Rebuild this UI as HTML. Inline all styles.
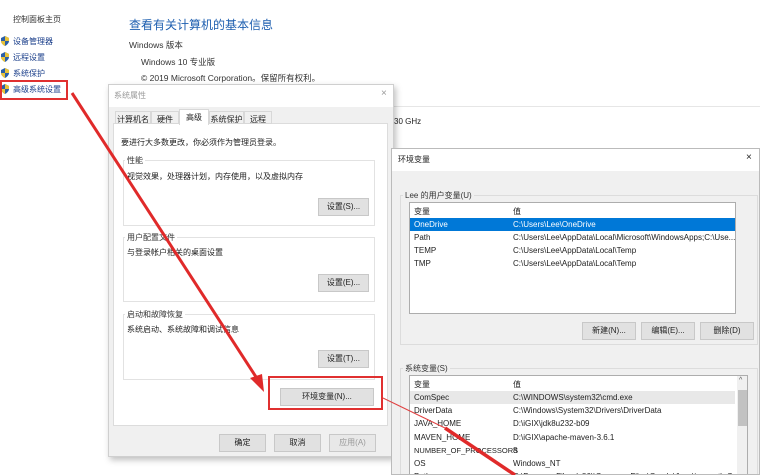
<!DOCTYPE html>
<html style="overflow:hidden;width:760px;height:475px"><head><meta charset="utf-8"><style>
*{margin:0;padding:0;box-sizing:border-box}
body{width:760px;height:475px;overflow:hidden;background:#fff;position:relative;font-family:"Liberation Sans","Noto Sans CJK SC",sans-serif;font-size:8px;color:#222}
.a{position:absolute;white-space:nowrap}
.sh{position:absolute;left:0;width:10px;height:10px}
.btn{position:absolute;background:#e1e1e1;border:1px solid #c8c8c8;text-align:center;font-size:8px;color:#222}
.grp{position:absolute;border:1px solid #e2e2e2}
.gl{position:absolute;background:#fff;padding:0 2px;font-size:8px;color:#333}
.tab{position:absolute;top:26px;height:13px;border:1px solid #d8d8d8;background:#f0f0f0;padding:2px 0;text-align:center;overflow:hidden}
</style></head><body>
<div class="a" style="left:13px;top:14px;font-size:8px;color:#333">控制面板主页</div>
<svg class="sh" style="top:36px" viewBox="0 0 10 10"><path d="M5 0L9 2V5C9 8 5 10 5 10S1 8 1 5V2Z" fill="#2a5fa8"/><path d="M5 0L9 2V5H5Z M1 5H5V10C3 9 1 7 1 5Z" fill="#e8c33a"/></svg>
<div class="a" style="left:13px;top:36px;color:#1a3e8a">设备管理器</div>
<svg class="sh" style="top:52px" viewBox="0 0 10 10"><path d="M5 0L9 2V5C9 8 5 10 5 10S1 8 1 5V2Z" fill="#2a5fa8"/><path d="M5 0L9 2V5H5Z M1 5H5V10C3 9 1 7 1 5Z" fill="#e8c33a"/></svg>
<div class="a" style="left:13px;top:52px;color:#1a3e8a">远程设置</div>
<svg class="sh" style="top:68px" viewBox="0 0 10 10"><path d="M5 0L9 2V5C9 8 5 10 5 10S1 8 1 5V2Z" fill="#2a5fa8"/><path d="M5 0L9 2V5H5Z M1 5H5V10C3 9 1 7 1 5Z" fill="#e8c33a"/></svg>
<div class="a" style="left:13px;top:68px;color:#1a3e8a">系统保护</div>
<svg class="sh" style="top:84px" viewBox="0 0 10 10"><path d="M5 0L9 2V5C9 8 5 10 5 10S1 8 1 5V2Z" fill="#2a5fa8"/><path d="M5 0L9 2V5H5Z M1 5H5V10C3 9 1 7 1 5Z" fill="#e8c33a"/></svg>
<div class="a" style="left:13px;top:84px;color:#1a3e8a">高级系统设置</div>
<div class="a" style="left:0;top:80px;width:68px;height:20px;border:2px solid #e03030"></div>

<div class="a" style="left:129px;top:16px;font-size:12px;color:#1e5fb0">查看有关计算机的基本信息</div>
<div class="a" style="left:129px;top:39px;font-size:8.5px;color:#333">Windows 版本</div>
<div class="a" style="left:141px;top:56px;font-size:8.5px;color:#333">Windows 10 专业版</div>
<div class="a" style="left:141px;top:72px;font-size:8.5px;color:#333">© 2019 Microsoft Corporation。保留所有权利。</div>
<div class="a" style="left:393px;top:106px;width:367px;height:1px;background:#e6e6e6"></div>
<div class="a" style="left:394px;top:117px;font-size:8px">30 GHz</div>

<!-- system properties -->
<div class="a" style="left:108px;top:84px;width:286px;height:373px;background:#f0f0f0;border:1px solid #cfcfcf;box-shadow:2px 3px 6px rgba(0,0,0,.25)">
<div class="a" style="left:0;top:0;width:284px;height:22px;background:#fff"></div>
<div class="a" style="left:5px;top:5px;color:#999">系统属性</div>
<div class="a" style="left:272px;top:3px;color:#999;font-size:10px">×</div>
<div class="a" style="left:4px;top:38px;width:275px;height:303px;background:#fff;border:1px solid #dcdcdc"></div>
<div class="tab" style="left:6px;width:36px">计算机名</div>
<div class="tab" style="left:42px;width:28px">硬件</div>
<div class="tab" style="left:100px;width:35px">系统保护</div>
<div class="tab" style="left:135px;width:28px">远程</div>
<div class="a" style="left:70px;top:24px;width:30px;height:16px;border:1px solid #d8d8d8;border-bottom:none;background:#fff;padding:2px 0;text-align:center">高级</div>
<div class="a" style="left:12px;top:52px">要进行大多数更改，你必须作为管理员登录。</div>
<div class="grp" style="left:14px;top:75px;width:252px;height:66px"></div><div class="gl" style="left:16px;top:70px">性能</div>
<div class="a" style="left:18px;top:86px">视觉效果，处理器计划，内存使用，以及虚拟内存</div>
<div class="btn" style="left:209px;top:113px;width:51px;height:18px;line-height:16px">设置(S)...</div>
<div class="grp" style="left:14px;top:152px;width:252px;height:65px"></div><div class="gl" style="left:16px;top:147px">用户配置文件</div>
<div class="a" style="left:18px;top:162px">与登录帐户相关的桌面设置</div>
<div class="btn" style="left:209px;top:189px;width:51px;height:18px;line-height:16px">设置(E)...</div>
<div class="grp" style="left:14px;top:229px;width:252px;height:66px"></div><div class="gl" style="left:16px;top:224px">启动和故障恢复</div>
<div class="a" style="left:18px;top:239px">系统启动、系统故障和调试信息</div>
<div class="btn" style="left:209px;top:265px;width:51px;height:18px;line-height:16px">设置(T)...</div>
<div class="btn" style="left:171px;top:303px;width:94px;height:18px;line-height:16px">环境变量(N)...</div>
<div class="btn" style="left:110px;top:349px;width:47px;height:18px;line-height:16px">确定</div>
<div class="btn" style="left:165px;top:349px;width:47px;height:18px;line-height:16px">取消</div>
<div class="btn" style="left:220px;top:349px;width:47px;height:18px;line-height:16px;color:#999;background:#e8e8e8">应用(A)</div>
</div>
<div class="a" style="left:268px;top:376px;width:115px;height:34px;border:2px solid #e03030"></div>

<!-- env vars -->
<div class="a" style="left:391px;top:148px;width:369px;height:327px;background:#f0f0f0;border:1px solid #bbb;overflow:hidden">
<div class="a" style="left:0;top:0;width:368px;height:22px;background:#fff"></div>
<div class="a" style="left:6px;top:5px">环境变量</div>
<div class="a" style="left:354px;top:3px;font-size:10px">×</div>
<div class="grp" style="left:8px;top:46px;width:358px;height:150px;border-color:#dcdcdc"></div>
<div class="gl" style="left:11px;top:41px;background:#f0f0f0">Lee 的用户变量(U)</div>
<div class="a" style="left:17px;top:53px;width:327px;height:112px;background:#fff;border:1px solid #adadad">
<div class="a" style="left:4px;top:3px">变量</div><div class="a" style="left:103px;top:3px">值</div>
<div class="a" style="left:0;top:15px;width:325px;height:13px;background:#0078d7"></div>
<div class="a" style="left:4px;top:17px;color:#fff">OneDrive</div><div class="a" style="left:103px;top:17px;color:#fff">C:\Users\Lee\OneDrive</div>
<div class="a" style="left:4px;top:30px">Path</div><div class="a" style="left:103px;top:30px">C:\Users\Lee\AppData\Local\Microsoft\WindowsApps;C:\Use...</div>
<div class="a" style="left:4px;top:43px">TEMP</div><div class="a" style="left:103px;top:43px">C:\Users\Lee\AppData\Local\Temp</div>
<div class="a" style="left:4px;top:56px">TMP</div><div class="a" style="left:103px;top:56px">C:\Users\Lee\AppData\Local\Temp</div>
</div>
<div class="btn" style="left:190px;top:173px;width:54px;height:18px;line-height:16px">新建(N)...</div>
<div class="btn" style="left:249px;top:173px;width:54px;height:18px;line-height:16px">编辑(E)...</div>
<div class="btn" style="left:308px;top:173px;width:54px;height:18px;line-height:16px">删除(D)</div>
<div class="grp" style="left:8px;top:219px;width:358px;height:120px;border-color:#dcdcdc"></div>
<div class="gl" style="left:11px;top:214px;background:#f0f0f0">系统变量(S)</div>
<div class="a" style="left:17px;top:226px;width:339px;height:110px;background:#fff;border:1px solid #adadad;overflow:hidden">
<div class="a" style="left:4px;top:3px">变量</div><div class="a" style="left:103px;top:3px">值</div>
<div class="a" style="left:0;top:15px;width:325px;height:13px;background:#e8e8e8"></div>
<div class="a" style="left:4px;top:17px">ComSpec</div><div class="a" style="left:103px;top:17px">C:\WINDOWS\system32\cmd.exe</div>
<div class="a" style="left:4px;top:30px">DriverData</div><div class="a" style="left:103px;top:30px">C:\Windows\System32\Drivers\DriverData</div>
<div class="a" style="left:4px;top:43px">JAVA_HOME</div><div class="a" style="left:103px;top:43px">D:\iGIX\jdk8u232-b09</div>
<div class="a" style="left:4px;top:57px">MAVEN_HOME</div><div class="a" style="left:103px;top:57px">D:\iGIX\apache-maven-3.6.1</div>
<div class="a" style="left:4px;top:70px;font-size:7.5px">NUMBER_OF_PROCESSORS</div><div class="a" style="left:103px;top:70px">8</div>
<div class="a" style="left:4px;top:83px">OS</div><div class="a" style="left:103px;top:83px">Windows_NT</div>
<div class="a" style="left:4px;top:96px">Path</div><div class="a" style="left:103px;top:96px">C:\Program Files (x86)\Common Files\Oracle\Java\javapath;C:...</div>
<div class="a" style="left:327px;top:0;width:11px;height:108px;background:#f0f0f0"></div>
<div class="a" style="left:328px;top:14px;width:9px;height:36px;background:#c2c2c2"></div>
<div class="a" style="left:329px;top:1px;font-size:7px;color:#555">^</div>
</div>
</div>

<svg class="a" style="left:0;top:0" width="760" height="475">
<line x1="72" y1="93" x2="258" y2="380" stroke="#e02a2a" stroke-width="3"/>
<polygon points="264,392 250,378 262,374" fill="#e02a2a"/>
<line x1="383" y1="398" x2="445" y2="428" stroke="#e04040" stroke-width="1"/>
<line x1="445" y1="428" x2="515" y2="475" stroke="#e02a2a" stroke-width="3.5"/>
</svg>
</body></html>
